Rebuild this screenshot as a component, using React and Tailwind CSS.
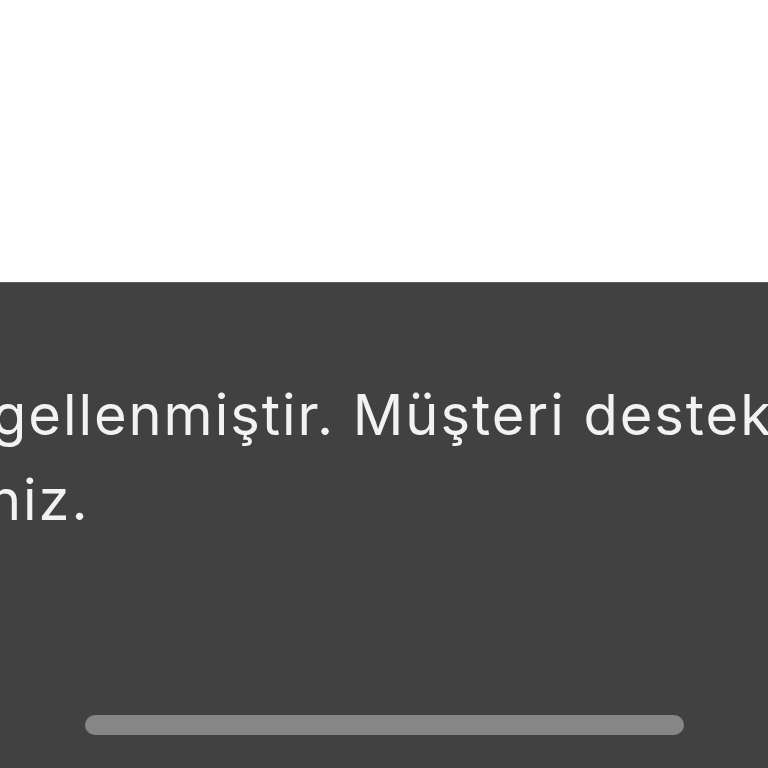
export default function App() {
  return (
    <div className="w-[768px] h-[768px] overflow-hidden flex flex-col bg-white" style={{ fontFamily: "Inter, 'Noto Sans', sans-serif" }}>
      <div className="h-[282px] bg-[#fefefe]" />
      <div className="flex-1 bg-[#414141] border-t border-[#5a5a5a] flex flex-col overflow-hidden">
        <div className="pt-[90px] text-[56px] leading-[85px] tracking-[0.035em] text-[#f2f2f2] whitespace-nowrap">
          <p className="ml-[-8px]">gellenmiştir. Müşteri desteklerimize</p>
          <p className="ml-[-12px]">niz.</p>
        </div>
        <div className="flex-1" />
        <div className="flex justify-start pl-[85px] pb-[33px]">
          <div className="w-[599px] h-[20px] rounded-full bg-[#868686]" />
        </div>
      </div>
    </div>
  );
}
